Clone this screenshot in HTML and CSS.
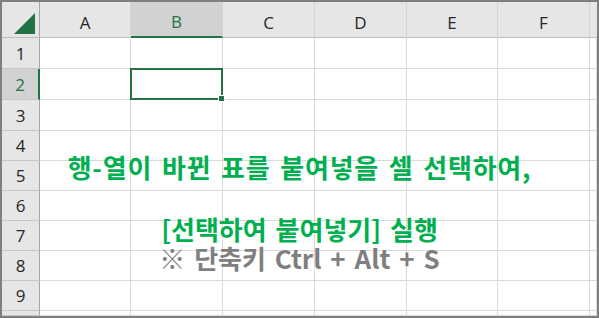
FILE: index.html
```html
<!DOCTYPE html>
<html>
<head>
  <meta charset="UTF-8">
  <title>행-열 바꿔 붙여넣기</title>
  <link rel="stylesheet" href="styles.css">
</head>
<body>
  <div class="sheet">
    <div class="grid">
      <div class="corner">
        <svg width="22" height="22" viewBox="0 0 22 22"><polygon points="21,0 21,21 0,21" fill="#217346"/></svg>
      </div>
      <div class="col-head">A</div>
      <div class="col-head sel">B</div>
      <div class="col-head">C</div>
      <div class="col-head">D</div>
      <div class="col-head">E</div>
      <div class="col-head">F</div>
      <div class="col-head last"></div>

      <div class="row-head">1</div>
      <div class="cell"></div><div class="cell"></div><div class="cell"></div><div class="cell"></div><div class="cell"></div><div class="cell"></div><div class="cell"></div>

      <div class="row-head sel">2</div>
      <div class="cell"></div>
      <div class="cell active"><div class="cursor"><span class="handle"></span></div></div>
      <div class="cell"></div><div class="cell"></div><div class="cell"></div><div class="cell"></div><div class="cell"></div>

      <div class="row-head">3</div>
      <div class="cell"></div><div class="cell"></div><div class="cell"></div><div class="cell"></div><div class="cell"></div><div class="cell"></div><div class="cell"></div>

      <div class="row-head">4</div>
      <div class="cell"></div><div class="cell"></div><div class="cell"></div><div class="cell"></div><div class="cell"></div><div class="cell"></div><div class="cell"></div>

      <div class="row-head">5</div>
      <div class="cell"></div><div class="cell"></div><div class="cell"></div><div class="cell"></div><div class="cell"></div><div class="cell"></div><div class="cell"></div>

      <div class="row-head">6</div>
      <div class="cell"></div><div class="cell"></div><div class="cell"></div><div class="cell"></div><div class="cell"></div><div class="cell"></div><div class="cell"></div>

      <div class="row-head">7</div>
      <div class="cell"></div><div class="cell"></div><div class="cell"></div><div class="cell"></div><div class="cell"></div><div class="cell"></div><div class="cell"></div>

      <div class="row-head">8</div>
      <div class="cell"></div><div class="cell"></div><div class="cell"></div><div class="cell"></div><div class="cell"></div><div class="cell"></div><div class="cell"></div>

      <div class="row-head">9</div>
      <div class="cell"></div><div class="cell"></div><div class="cell"></div><div class="cell"></div><div class="cell"></div><div class="cell"></div><div class="cell"></div>

      <div class="row-head"></div>
      <div class="cell"></div><div class="cell"></div><div class="cell"></div><div class="cell"></div><div class="cell"></div><div class="cell"></div><div class="cell"></div>
    </div>

    <div class="note">
      <div class="line green wide">행-열이 바뀐 표를 붙여넣을 셀 선택하여,</div>
      <div class="line green gap">[선택하여 붙여넣기] 실행</div>
      <div class="line grey">※ 단축키 Ctrl + Alt + S</div>
    </div>
  </div>
</body>
</html>
```

FILE: styles.css
```css
body {
  margin: 0;
  padding: 0;
  background: #fff;
}
.sheet {
  position: relative;
  width: 599px;
  height: 318px;
  box-sizing: border-box;
  border: 2px solid #7f7f7f;
  overflow: hidden;
  font-family: "Open Sans", "Noto Sans", sans-serif;
}
.grid {
  display: grid;
  grid-template-columns: 38px 91px 92px 92px 92px 91px 92px 1fr;
  grid-template-rows: 36px 31px 31px 31px 30px 30px 30px 30px 30px 30px 1fr;
  height: 100%;
}
.corner {
  background: #e6e6e6;
  border-right: 1px solid #a6a6a6;
  border-bottom: 1px solid #bdbdbd;
  display: flex;
  align-items: flex-end;
  justify-content: flex-end;
  padding: 0 3px 2px 0;
}
.col-head {
  background: #e6e6e6;
  border-right: 1px solid #d4d4d4;
  border-bottom: 1px solid #bdbdbd;
  display: flex;
  align-items: center;
  justify-content: center;
  padding-top: 5px;
  font-size: 17px;
  color: #262626;
}
.col-head.sel {
  background: #d2d2d2;
  border-bottom: 2px solid #217346;
  color: #217346;
}
.col-head.last {
  border-right: none;
}
.row-head {
  background: #e6e6e6;
  border-right: 1px solid #a6a6a6;
  border-bottom: 1px solid #c6c6c6;
  display: flex;
  align-items: center;
  justify-content: center;
  font-size: 17px;
  color: #262626;
}
.row-head.sel {
  background: #d2d2d2;
  border-right: 2px solid #217346;
  color: #217346;
}
.cell {
  border-right: 1px solid #dadada;
  border-bottom: 1px solid #dadada;
  position: relative;
}
.cursor {
  position: absolute;
  left: -1px;
  top: -1px;
  right: -1px;
  bottom: -1px;
  border: 2px solid #217346;
  z-index: 2;
}
.handle {
  position: absolute;
  right: -4px;
  bottom: -4px;
  width: 5px;
  height: 5px;
  background: #217346;
  border: 1px solid #fff;
}
.note {
  position: absolute;
  left: 0;
  right: 0;
  top: 150px;
  display: flex;
  flex-direction: column;
  align-items: center;
  font-family: "Noto Sans CJK KR", sans-serif;
  font-weight: 700;
  font-size: 26px;
  word-spacing: 3px;
}
.line {
  line-height: 29px;
  white-space: nowrap;
}
.wide {
  letter-spacing: 0.8px;
}
.green {
  color: #00b050;
}
.grey {
  color: #7f7f7f;
}
.gap {
  margin-top: 33px;
}
```
